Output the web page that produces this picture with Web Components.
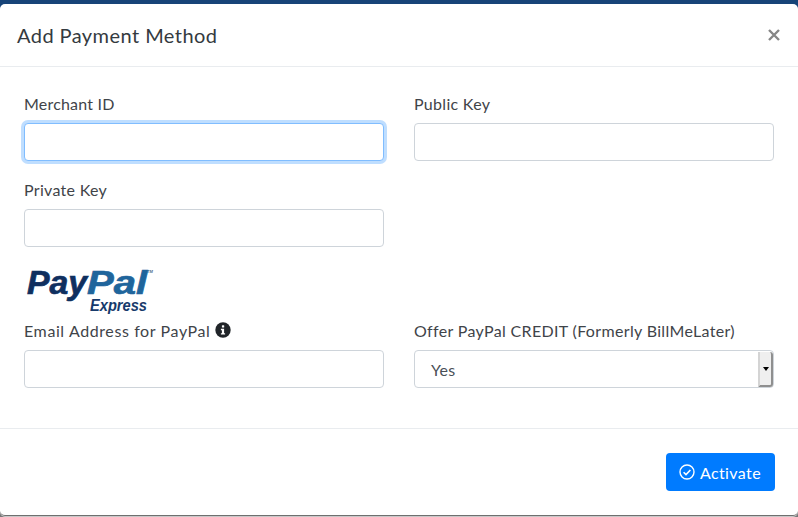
<!DOCTYPE html>
<html>
<head>
<meta charset="utf-8">
<title>Add Payment Method</title>
<style>
  html, body { margin: 0; height: 100%; }
  body {
    background: linear-gradient(#174478 50%, #777 50%);
    font-family: Lato, "Open Sans", sans-serif;
    color: #3b4045;
    overflow: hidden;
  }
</style>
</head>
<body>
<payment-modal>
  <span slot="title">Add Payment Method</span>
  <form-row>
    <form-field label="Merchant ID" spacing=".2px" focused></form-field>
    <form-field label="Public Key" spacing=".3px"></form-field>
  </form-row>
  <form-row>
    <form-field label="Private Key" spacing=".3px"></form-field>
  </form-row>
  <paypal-logo></paypal-logo>
  <form-row>
    <form-field label="Email Address for PayPal" spacing=".6px" info></form-field>
    <form-field label="Offer PayPal CREDIT (Formerly BillMeLater)" spacing=".34px" type="select" value="Yes"></form-field>
  </form-row>
  <primary-button slot="footer">Activate</primary-button>
</payment-modal>

<script>
class PaymentModal extends HTMLElement {
  constructor() {
    super();
    this.attachShadow({ mode: "open" });
    this.shadowRoot.innerHTML = `
      <style>
        :host {
          display: block;
          margin-top: 4px;
          height: 512px;
          background: #fff;
          border-radius: 5px;
          border-bottom: 1px solid #6f6f6f;
          box-shadow: 0 1px 0 #c8c8c8;
          box-sizing: border-box;
        }
        header {
          display: flex;
          justify-content: space-between;
          align-items: center;
          height: 62px;
          padding: 0 18px 0 17px;
          border-bottom: 1px solid #e9ecef;
          font-size: 20px;
          letter-spacing: .44px;
          color: #343a40;
        }
        button {
          border: 0;
          background: none;
          padding: 0;
          display: flex;
        }
        main {
          padding: 24px 24px 8px;
          height: 362px;
          box-sizing: border-box;
          border-bottom: 1px solid #e9ecef;
        }
        footer {
          display: flex;
          justify-content: flex-end;
          padding: 24px 23px 24px 24px;
        }
      </style>
      <header>
        <slot name="title"></slot>
        <button aria-label="Close">
          <svg width="12" height="12" viewBox="0 0 12 12"><path d="M1 1l10 10M11 1L1 11" stroke="#868686" stroke-width="2.4" fill="none"/></svg>
        </button>
      </header>
      <main><slot></slot></main>
      <footer><slot name="footer"></slot></footer>
    `;
  }
}

class FormRow extends HTMLElement {
  constructor() {
    super();
    this.attachShadow({ mode: "open" });
    this.shadowRoot.innerHTML = `
      <style>
        :host { display: grid; grid-template-columns: 360px 360px; column-gap: 30px; }
      </style>
      <slot></slot>
    `;
  }
}

class FormField extends HTMLElement {
  constructor() {
    super();
    this.attachShadow({ mode: "open" });
  }

  connectedCallback() {
    const label = this.getAttribute("label");
    const info = this.hasAttribute("info")
      ? `<svg width="16" height="16" viewBox="0 0 16 16"><circle cx="8" cy="8" r="7.7" fill="#212529"/><rect x="6.9" y="3.2" width="2.3" height="2.3" rx=".6" fill="#fff"/><path d="M5.9 6.8h3.2v4.4h1v1.4H5.9v-1.4h1V8.2h-1z" fill="#fff"/></svg>`
      : "";
    const control = this.getAttribute("type") === "select"
      ? `<div class="control select">
           <span>${this.getAttribute("value")}</span>
           <i class="spin"><b></b></i>
         </div>`
      : `<input class="control ${this.hasAttribute("focused") ? "focus" : ""}" type="text">`;

    this.shadowRoot.innerHTML = `
      <style>
        :host { display: block; margin-bottom: 16px; font-size: 16px; }
        label {
          display: flex;
          align-items: center;
          gap: 5px;
          height: 24px;
          margin-bottom: 8px;
          color: #3f4449;
          letter-spacing: ${this.getAttribute("spacing") || "0"};
        }
        .control {
          display: block;
          width: 100%;
          height: 38px;
          box-sizing: border-box;
          border: 1px solid #ced4da;
          border-radius: 4px;
          background: #fff;
          padding: 6px 16px;
          font: inherit;
          outline: 0;
        }
        .focus {
          border-color: #80bdff;
          box-shadow: 0 0 0 3px rgba(0, 123, 255, .25);
        }
        .select {
          display: flex;
          align-items: center;
          position: relative;
          color: #495057;
          letter-spacing: .3px;
        }
        .spin {
          position: absolute;
          top: 1px;
          right: 0;
          bottom: 0;
          width: 15px;
          box-sizing: border-box;
          background: #efefef;
          border-left: 2px solid #d4d4d4;
          border-right: 2px solid #8f8f8f;
          border-bottom: 2px solid #8f8f8f;
          border-radius: 0 3px 3px 0;
          display: flex;
          align-items: center;
          justify-content: center;
        }
        .spin b {
          border: 3.5px solid transparent;
          border-top: 4px solid #000;
          border-bottom: 0;
        }
      </style>
      <label>${label}${info}</label>
      ${control}
    `;
  }
}

class PaypalLogo extends HTMLElement {
  constructor() {
    super();
    this.attachShadow({ mode: "open" });
    this.shadowRoot.innerHTML = `
      <style>
        :host { display: block; height: 55px; }
        svg { display: block; }
        text { font-family: "Liberation Sans", sans-serif; font-weight: 700; font-style: italic; }
      </style>
      <svg width="140" height="55" viewBox="0 0 140 55">
        <text x="3" y="31" font-size="33" textLength="60" lengthAdjust="spacingAndGlyphs" fill="#0f2f5f" stroke="#0f2f5f" stroke-width=".7">Pay</text>
        <text x="63" y="31" font-size="33" textLength="60" lengthAdjust="spacingAndGlyphs" fill="#1f659c" stroke="#1f659c" stroke-width=".7">Pal</text>
        <text x="66" y="48" font-size="16" textLength="57" lengthAdjust="spacingAndGlyphs" fill="#173a6b">Express</text>
        <text x="123" y="10" font-size="4" fill="#4a6a8a">TM</text>
      </svg>
    `;
  }
}

class PrimaryButton extends HTMLElement {
  constructor() {
    super();
    this.attachShadow({ mode: "open" });
    this.shadowRoot.innerHTML = `
      <style>
        :host { display: block; }
        button {
          display: flex;
          align-items: center;
          gap: 5px;
          height: 38px;
          padding: 0 14px 0 13px;
          border: 0;
          border-radius: 4px;
          background: #007bff;
          color: #fff;
          font: 16px Lato, "Open Sans", sans-serif;
          letter-spacing: .4px;
        }
      </style>
      <button>
        <svg width="16" height="16" viewBox="0 0 16 16" fill="none" stroke="#fff"><circle cx="8" cy="8" r="7" stroke-width="1.4"/><path d="M4.6 8.2l2.4 2.4 4.4-4.6" stroke-width="1.6"/></svg>
        <slot></slot>
      </button>
    `;
  }
}

customElements.define("payment-modal", PaymentModal);
customElements.define("form-row", FormRow);
customElements.define("form-field", FormField);
customElements.define("paypal-logo", PaypalLogo);
customElements.define("primary-button", PrimaryButton);
</script>
</body>
</html>
